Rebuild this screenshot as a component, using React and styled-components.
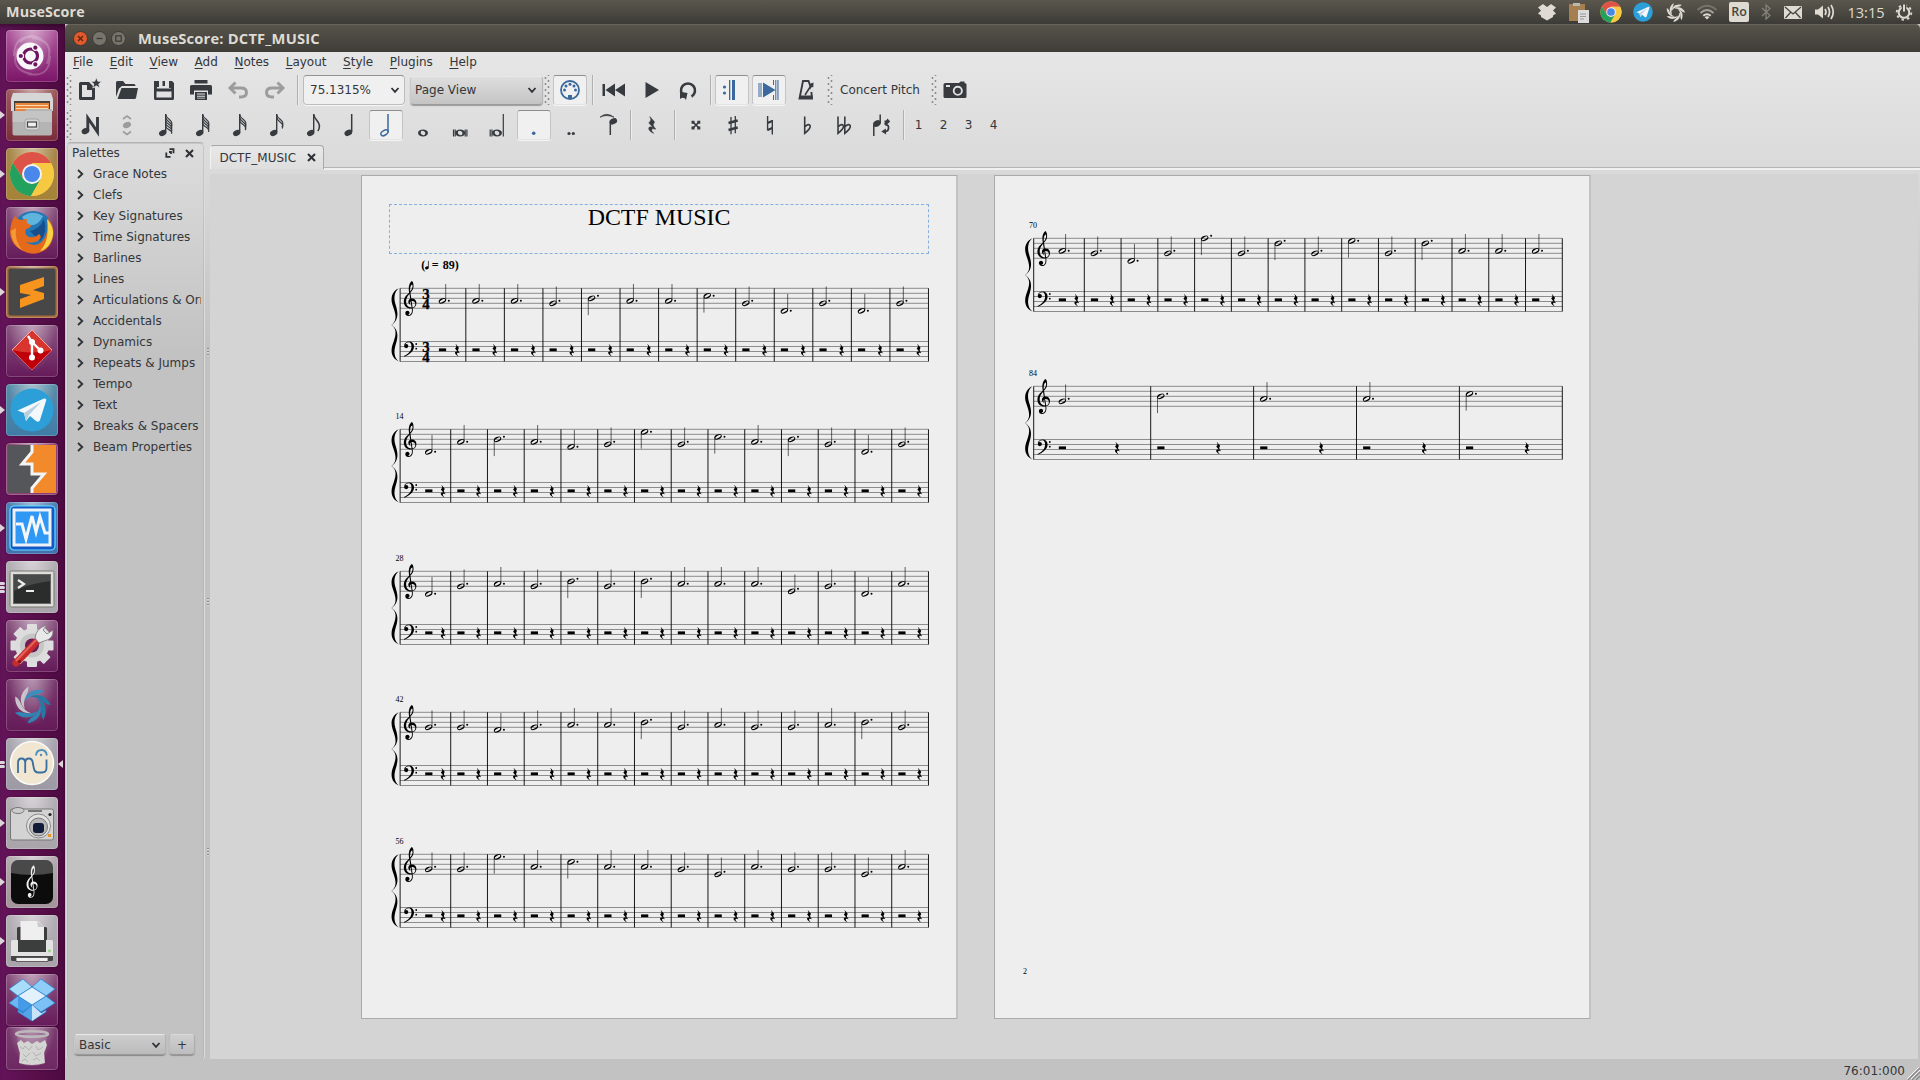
import React from "react";
import styled, { createGlobalStyle, css } from "styled-components";

const Global = createGlobalStyle`
  * { box-sizing: border-box; }
  html, body { margin: 0; padding: 0; overflow: hidden; background: #c2c2c2; }
  body { font-family: "DejaVu Sans", sans-serif; font-size: 12px; color: #33363a; }
  svg { display: block; flex: none; }
`;

const INK = "#373b40";
const BLUE = "#3b699e";

/* ---------- shell ---------- */

const Desktop = styled.div`
  width: 1920px;
  height: 1080px;
  display: flex;
  flex-direction: column;
  overflow: hidden;
`;
const TopBar = styled.header`
  height: 24px;
  flex: none;
  display: flex;
  align-items: center;
  justify-content: space-between;
  padding: 0 3px 0 6px;
  background: linear-gradient(#5b574e, #3c3b37);
  color: #dfdbd2;
  font-family: "Open Sans", "Noto Sans", sans-serif;
`;
const AppName = styled.span`
  font-size: 14.3px;
  font-weight: 700;
  line-height: 24px;
  letter-spacing: 0.15px;
`;
const Tray = styled.div`
  display: flex;
  align-items: center;
  height: 24px;
`;
const TrayItem = styled.span`
  width: ${(p) => p.$w || 32}px;
  display: flex;
  justify-content: center;
  align-items: center;
`;
const Clock = styled.span`
  width: 50px;
  text-align: center;
  font-size: 14.6px;
  line-height: 24px;
`;
const Keyboard = styled.span`
  width: 20px;
  height: 20px;
  border-radius: 2px;
  background: #dfdbd2;
  color: #45443f;
  font-size: 12.5px;
  font-weight: 600;
  line-height: 20px;
  text-align: center;
`;
const Columns = styled.div`
  flex: 1;
  display: flex;
  min-height: 0;
`;

/* ---------- launcher ---------- */

const Launcher = styled.nav`
  width: 65px;
  flex: none;
  padding-top: 6px;
  display: flex;
  flex-direction: column;
  background: linear-gradient(90deg, #64145a 0, #5a0f4c 50%, #4d0a41 64px, #3e0835 65px);
  box-shadow: inset 0 5px 4px -2px rgba(0, 0, 0, 0.35);
`;
const Slot = styled.div`
  height: 52px;
  margin-bottom: ${(p) => p.$gap ?? 7}px;
  display: grid;
  grid-template-columns: 6px 52px 7px;
  align-items: center;
`;
const Tile = styled.div`
  width: 52px;
  height: ${(p) => p.$h || 52}px;
  border-radius: 4px;
  overflow: hidden;
  background: radial-gradient(ellipse at 50% -10%, rgba(255, 255, 255, 0.5), rgba(255, 255, 255, 0) 65%), ${(p) => p.$bg};
  box-shadow: inset 0 0 0 1px rgba(255, 255, 255, 0.2), 0 0 2px rgba(0, 0, 0, 0.35);
`;
const Pips = styled.div`
  display: flex;
  flex-direction: column;
  gap: 1px;
`;
const Pip = styled.i`
  width: 5px;
  height: 3px;
  border-radius: 0 2px 2px 0;
  background: #dcd5da;
`;

/* ---------- window ---------- */

const Window = styled.main`
  flex: 1;
  min-width: 0;
  display: flex;
  flex-direction: column;
`;
const TitleBar = styled.div`
  height: 28px;
  flex: none;
  display: flex;
  align-items: center;
  gap: 4px;
  padding: 1px 0 0 8px;
  border-radius: 5px 5px 0 0;
  background: linear-gradient(#58544b, #3e3d38);
  box-shadow: inset 0 1px 0 #68645a;
`;
const WindowTitle = styled.span`
  margin-left: 8px;
  font-family: "Open Sans", "Noto Sans", sans-serif;
  font-size: 14.7px;
  font-weight: 700;
  letter-spacing: 0.2px;
  color: #dfdbd2;
  line-height: 27px;
`;
const Chrome = styled.div`
  flex: 1;
  min-height: 0;
  display: flex;
  flex-direction: column;
  background: linear-gradient(#e6e6e6 0, #dadada 115px, #c2c2c2 300px);
`;
const MenuBar = styled.div`
  height: 20px;
  flex: none;
  display: flex;
  gap: 16.6px;
  padding-left: 8px;
  line-height: 20px;
`;
const MenuItem = styled.div`
  &::first-letter {
    text-decoration: underline;
    text-underline-offset: 2px;
  }
`;
const Toolbar = styled.div`
  height: ${(p) => p.$h}px;
  flex: none;
  display: flex;
  align-items: center;
`;
const Grip = styled.i`
  width: ${(p) => p.$w || 8}px;
  height: 30px;
  flex: none;
  margin-right: ${(p) => p.$mr || 0}px;
  background-image: radial-gradient(circle, #8c8c8c 0.9px, transparent 1.2px), radial-gradient(circle, #8c8c8c 0.9px, transparent 1.2px);
  background-size: 7px 6px;
  background-position: -1px 0, 2px 3px;
  background-repeat: repeat-y;
`;
const pressed = css`
  background: #f0f0f0;
  border: 1px solid #c4c4c4;
  border-top: 1.5px solid #8f8f8f;
  border-bottom-color: #e3e3e3;
  box-shadow: 0 1px 0 #f4f4f4;
`;
const ToolButton = styled.span`
  width: 34px;
  height: 30px;
  flex: none;
  margin-right: 3px;
  border-radius: 3px;
  border: 1px solid transparent;
  display: flex;
  align-items: center;
  justify-content: center;
  ${(p) => p.$on && pressed}
`;
const Separator = styled.i`
  width: 5px;
  height: 30px;
  flex: none;
  margin-right: ${(p) => p.$mr || 0}px;
  background: linear-gradient(90deg, transparent 2px, #b0b0b0 2px, #b0b0b0 3px, #ececec 3px, #ececec 4px, transparent 4px);
`;
const ZoomBox = styled.div`
  width: 102px;
  height: 30px;
  margin: 0 5px 0 3px;
  padding: 0 4px 0 6px;
  display: flex;
  align-items: center;
  justify-content: space-between;
  border-radius: 4px;
  border: 1px solid #bdbdbd;
  border-top: 1.5px solid #929292;
  background: #f0f0f0;
  box-shadow: 0 1px 0 #f6f6f6;
`;
const Combo = styled.div`
  width: ${(p) => p.$w}px;
  height: ${(p) => p.$h}px;
  padding: 0 ${(p) => p.$pr || 5}px 0 4px;
  display: flex;
  align-items: center;
  justify-content: space-between;
  border-radius: 4px;
  border: 1px solid #f0f0f0;
  border-color: #e9e9e9 #b4b4b4 #9a9a9a #c8c8c8;
  background: linear-gradient(${(p) => p.$bg || "#dedede, #c4c4c4"});
  box-shadow: 0 1px 1px rgba(0, 0, 0, 0.3);
`;
const ToolLabel = styled.span`
  width: ${(p) => p.$w}px;
  flex: none;
  text-align: ${(p) => p.$align || "left"};
`;
const Workspace = styled.div`
  flex: 1;
  min-height: 0;
  display: flex;
`;

/* ---------- palettes ---------- */

const Dock = styled.aside`
  width: 139px;
  height: 919px;
  flex: none;
  margin-left: 1px;
  display: flex;
  flex-direction: column;
  border: 1px solid #dcdcdc;
  border-top-color: #b2b2b2;
  border-radius: 5px;
  box-shadow: inset 0 0 0 1px rgba(160, 160, 160, 0.35);
  overflow: hidden;
`;
const DockHead = styled.div`
  height: 20px;
  flex: none;
  display: flex;
  align-items: center;
  padding-left: 5px;
`;
const DockTitle = styled.span`
  width: 92.5px;
`;
const FloatSlot = styled.span`
  width: 19px;
`;
const PaletteList = styled.div`
  flex: 1;
  width: 134px;
  overflow: hidden;
`;
const PaletteRow = styled.div`
  height: 21px;
  display: flex;
  align-items: center;
  gap: 9px;
  padding-left: 10px;
  white-space: nowrap;
`;
const DockFoot = styled.div`
  height: 26px;
  flex: none;
  display: flex;
  gap: 3px;
  padding-left: 7px;
`;
const AddButton = styled.span`
  width: 26px;
  height: 21px;
  display: flex;
  align-items: center;
  justify-content: center;
  border: 1px solid;
  border-color: #dadada #adadad #989898 #bcbcbc;
  border-radius: 4px;
  background: linear-gradient(#cfcfcf, #bdbdbd);
  box-shadow: 0 1px 1px rgba(0, 0, 0, 0.25);
`;
const Splitter = styled.div`
  width: 5px;
  height: 919px;
  display: flex;
  flex-direction: column;
  align-items: center;
  padding-top: 206px;
  gap: 242px;
`;
const SplitDots = styled.i`
  width: 2px;
  height: 8px;
  background: repeating-linear-gradient(#8d8d8d 0 1px, #d8d8d8 1px 2px, transparent 2px 3px);
`;

/* ---------- document ---------- */

const DocArea = styled.section`
  flex: 1;
  min-width: 0;
  display: flex;
  flex-direction: column;
`;
const TabStrip = styled.div`
  height: 32px;
  flex: none;
  display: flex;
  align-items: flex-start;
  padding-top: 3px;
`;
const Tab = styled.div`
  width: 114px;
  height: 24px;
  flex: none;
  padding: 0 6px 0 8.5px;
  display: flex;
  align-items: center;
  justify-content: space-between;
  border: 1px solid #f2f2f2;
  border-right-color: #a8a8a8;
  border-top-color: #a8a8a8;
  border-bottom: 0;
  border-radius: 4px 4px 0 0;
  background: linear-gradient(#e8e8e8, #dedede);
`;
const TabRule = styled.i`
  flex: 1;
  height: 23px;
  border-bottom: 1px solid #b4b4b4;
  box-shadow: 0 2px 0 #f0f0f0;
`;
const Canvas = styled.div`
  height: 885px;
  margin-right: 2px;
  padding: 1px 0 0 151px;
  display: flex;
  gap: 37px;
  align-items: flex-start;
  background: #d4d4d4;
`;
const Sheet = styled.article`
  width: 597px;
  height: 844px;
  margin-right: -1px;
  border: 1px solid #ababab;
  border-right: 2px solid #c2c2c2;
  background: #eeeeee;
  padding-top: ${(p) => p.$top}px;
  display: flex;
  flex-direction: column;
`;
const TitleFrame = styled.div`
  width: 540px;
  height: 50px;
  flex: none;
  margin-left: 27px;
  border: 1px dashed #86afdf;
  text-align: center;
  font-family: "Liberation Serif", serif;
  font-size: 23.9px;
  line-height: 25px;
  color: #000;
`;
const SheetNumber = styled.span`
  margin: auto 0 40px 28px;
  font-family: "Liberation Serif", serif;
  font-size: 8px;
  line-height: 12px;
  color: #000;
`;
const StatusBar = styled.footer`
  height: 21px;
  flex: none;
  display: flex;
  justify-content: flex-end;
  align-items: center;
  padding-top: 2px;
  background: #c2c2c2;
  gap: 2px;
`;
const SizeGrip = styled.span`
  align-self: flex-end;
`;

/* ---------- engraving ---------- */

const TREBLE =
  "M5.5 4.6C4.4 .4 4.8 -5 8 -7.3C9.8 -6.2 10.2 -1.8 9.2 .8C7.9 4.2 2.5 7.4 2.3 12.8C2.1 16.8 4.8 19.4 8 19.2C10.6 19 11.8 17 11.4 15.1C11 13.2 9.4 12.5 8 12.7C6 13 5.4 15.2 7 16.9C4 15.8 3.4 11.6 7 10.3C10.6 9.3 12.8 12 12.6 15C12.4 18.4 9.8 20.2 7 20.2C3 20.2 0 17.4 0 13.4C0 8.4 3.8 6.2 6.4 3.2C8.3 1 9.2 -1.8 8.5 -3.9C7 -3.8 5.9 -.8 6.5 3.4L8.9 20.5C9.5 24.8 7.8 27.7 4.8 27.7C2.6 27.7 1.4 26.2 1.5 24.6C1.7 21.8 5.6 21.8 5.7 24.5C5.7 25.8 4.8 26.6 3.9 26.7C6.9 27.4 8.6 24.8 8 20.8Z";

function Bass() {
  return (
    <g>
      <path d="M.4 3.6C.8 1.2 3 0 5.2 0C8.4 0 10.2 2 10.2 5C10.2 9.6 5.6 13.2 .3 15.2L.1 14.6C4.6 12.4 7.7 9.4 7.7 5C7.7 2.6 6.8 .8 4.8 .8C3.3 .8 1.9 1.6 1.5 3Z" />
      <circle cx="2.4" cy="4.6" r="2.1" />
      <circle cx="12.4" cy="2.5" r=".9" />
      <circle cx="12.4" cy="7.2" r=".9" />
    </g>
  );
}

const REST =
  "M1.100 -6.200L4 -2.600C4.300 -2.200 4.200 -1.900 3.900 -1.500C2.900 -.3 3.200 .8 5 2.900L4.700 3.200C3.200 2.400 2.100 2.700 2.300 4C2.400 4.800 3 5.400 3.700 5.900L3.400 6.200C1.500 5.200 -.1 3.400 .3 2.200C.7 1.100 2 1.200 3 1.700L.5 -1.300C.3 -1.600 .4 -1.800 .7 -2.100C1.900 -3.200 2 -4.400 .9 -5.900Z";

const STEP = { F5: 0, E5: 1, D5: 2, C5: 3, B: 4, A: 5, G: 6, F: 7, E: 8, D: 9 };

function HalfNote({ x, step }) {
  const y = step * 2.5;
  const down = step <= 4;
  const dotY = step % 2 === 0 ? y - 2.5 : y;
  return (
    <g>
      <path
        fillRule="evenodd"
        transform={`translate(${x + 3.6} ${y}) rotate(-24)`}
        d="M-3.9 0A3.9 2.4 0 1 0 3.9 0A3.9 2.4 0 1 0 -3.9 0ZM-3.2 .3A3.2 1.15 -6 1 0 3.2 -.3A3.2 1.15 -6 1 0 -3.2 .3Z"
      />
      <path
        stroke="#000"
        strokeWidth=".6"
        d={down ? `M${x + 0.3} ${y + 0.8}V${y + 16.8}` : `M${x + 6.9} ${y - 0.8}V${y - 16.8}`}
      />
      <circle cx={x + 10} cy={dotY} r="1" />
    </g>
  );
}

function Staff({ y, from, to }) {
  return (
    <g stroke="#000" strokeWidth=".42">
      {[0, 1, 2, 3, 4].map((i) => (
        <path key={i} d={`M${from} ${y + i * 5}H${to}`} />
      ))}
    </g>
  );
}

const BRACE =
  "M7.200 0C3 3.600 2 9 3.800 15.500C6.400 23.500 8 31 .3 36.600C8 42.200 6.400 49.700 3.800 57.700C2 64.200 3 69.600 7.200 73.200C.2 70 -1.200 63.200 1 56.500C3.800 48.500 6.600 41.500 0 36.600C6.600 31.700 3.800 24.700 1 16.700C-1.200 10 .2 3.200 7.200 0Z";

const System = ({ number, notes, left = 38.1, span = 528.4, firstBar, firstNote, firstRest, restOffset, height, time, tempo, top = 34.3 }) => {
  const right = left + span;
  const width = (right - left - firstBar) / (notes.length - 1);
  const bars = notes.map((_, i) => left + firstBar + i * width);
  return (
    <svg width="594" height={height} viewBox={`0 ${-top} 594 ${height}`} overflow="visible">
      {number && (
        <text x={left - 4.6} y="-10.8" fontFamily="Liberation Serif, serif" fontSize="8">
          {number}
        </text>
      )}
      {tempo && (
        <g fontFamily="Liberation Serif, serif" fontWeight="700" fontSize="12">
          <text x={left + 21.2} y="-19">(</text>
          <ellipse cx={left + 26.8} cy="-20.4" rx="1.9" ry="1.400" transform={`rotate(-20 ${left + 26.8} -20.4)`} />
          <path d={`M${left + 28.3} -21V-27.4`} stroke="#000" strokeWidth=".7" />
          <text x={left + 31.6} y="-19">=</text>
          <text x={left + 42.6} y="-19">{tempo})</text>
        </g>
      )}
      <path d={BRACE} transform={`translate(${left - 8.6} 0)`} />
      <Staff y={0} from={left} to={right} />
      <Staff y={53.2} from={left} to={right} />
      <path d={`M${left} 0V73.2`} stroke="#000" strokeWidth=".9" />
      <path d={TREBLE} transform={`translate(${left + 3.7} 0)`} />
      <g transform={`translate(${left + 3.7} 53.2)`}>
        <Bass />
      </g>
      {time &&
        [0, 53.2].map((y) => (
          <g key={y} fontFamily="Liberation Serif, serif" fontWeight="700" fontSize="14.800" stroke="#000" strokeWidth=".3">
            <text x={left + 22.2} y={y + 10.4}>{time[0]}</text>
            <text x={left + 22.2} y={y + 20.4}>{time[1]}</text>
          </g>
        ))}
      {notes.map((n, i) => {
        const x = i === 0 ? left + firstNote : bars[i - 1] + 6.5;
        const rx = i === 0 ? left + firstRest : bars[i - 1] + restOffset;
        return (
          <g key={i}>
            <HalfNote x={x} step={STEP[n]} />
            <rect x={x + 0.1} y="60.1" width="7.2" height="2.8" />
            <path d={REST} transform={`translate(${rx} 61.8)`} />
            <path d={`M${bars[i]} 0V73.2`} stroke="#000" strokeWidth=".9" />
          </g>
        );
      })}
    </svg>
  );
};

const full = { firstBar: 50.6, firstNote: 25, firstRest: 40.4, restOffset: 25.3, height: 141.4 };
const PAGE_ONE = [
  { notes: "A A A G B A A C5 G D G D G", firstBar: 65.7, firstNote: 38.7, firstRest: 54.6, restOffset: 26.4, height: 141.4, time: "34", tempo: "89" },
  { ...full, number: "14", notes: "D A B A F G E5 G C5 A B G D G" },
  { ...full, number: "28", notes: "D G A G B G B A A A E G D A" },
  { ...full, number: "42", notes: "G G F G A A B G A G G A B G" },
  { ...full, number: "56", notes: "G G E5 A C5 A A G E A G G E A" },
];
const PAGE_TWO = [
  { ...full, height: 148, number: "70", notes: "A G D G F5 G D5 G E5 G D5 A A A" },
  { number: "84", notes: "G B A A C5", firstBar: 117, firstNote: 25, firstRest: 81, restOffset: 65.2, height: 148 },
];

/* ---------- toolbar drawings ---------- */

const Icon = ({ children, color = INK }) => (
  <svg width="34" height="30" viewBox="0 0 34 30" fill={color} stroke="none">
    {children}
  </svg>
);
const line = (w, color = INK) => ({ fill: "none", stroke: color, strokeWidth: w });

const NewIcon = () => (
  <Icon>
    <path fillRule="evenodd" d="M7.5 7H16L22 13V23.5Q22 25 20.5 25H7.500Q6 25 6 23.500V8.500Q6 7 7.500 7ZM9 10V22H19V15H14V10Z" />
    <path stroke="#e0e0e0" strokeWidth=".8" d="M23.300 2.500L24.800 6.200L28.800 6.400L25.700 9L26.800 13L23.300 10.800L19.800 13L20.900 9L17.800 6.400L21.800 6.200Z" />
  </Icon>
);
const OpenIcon = () => (
  <Icon>
    <path d="M6 22V7.500Q6 6 7.500 6H13L15.500 9H24Q25.500 9 25.500 11H12L9 13.500Z" />
    <path d="M11.500 13H28L26 23Q25.800 24 24.500 24H7.500Z" />
  </Icon>
);
const SaveIcon = () => (
  <Icon>
    <path fillRule="evenodd" d="M7 6H25L27 8V23.500Q27 25 25.500 25H8.500Q7 25 7 23.500ZM10 6V13.500H24V6H18V11H15.500V6ZM9.500 16.500V22.500H24.500V16.500Z" />
    <path d="M10 6H12V12H10ZM22 6H25V13H22Z" />
  </Icon>
);
const PrintIcon = () => (
  <Icon>
    <rect x="10.500" y="5" width="13" height="3.500" />
    <path d="M7.500 10H26.500Q28 10 28 11.500V19.500H24V15.500H10V19.500H6V11.500Q6 10 7.500 10Z" />
    <path fillRule="evenodd" d="M11 17H23V25H11ZM13 18.500V19.500H21V18.500ZM13 20.700V21.700H21V20.700ZM13 22.800V23.600H21V22.800Z" />
  </Icon>
);
const UndoIcon = ({ flip }) => (
  <Icon>
    <g transform={flip ? "translate(34 0) scale(-1 1)" : undefined} {...line(2.900, "#9c9c9c")}>
      <path d="M9.500 13H20Q25.500 13 25.500 17.500Q25.500 22 20 22H18" />
      <path d="M14.500 7.500L9 13L14.500 18.500" />
    </g>
  </Icon>
);
const MidiIcon = () => (
  <Icon color={BLUE}>
    <circle cx="17" cy="15" r="9" {...line(1.800, BLUE)} />
    {[[11.500, 15], [13, 11], [17, 9.300], [21, 11], [22.500, 15]].map(([x, y]) => (
      <circle key={x} cx={x} cy={y} r="1.500" />
    ))}
    <path d="M15 20H19V24H15Z" />
  </Icon>
);
const RewindIcon = () => (
  <Icon>
    <path d="M5.500 9H8V21H5.500ZM18 8.500V21.500L8.500 15ZM28 8.500V21.500L18 15Z" />
  </Icon>
);
const PlayIcon = () => <Icon><path d="M11.500 7L25 15L11.500 23Z" /></Icon>;
const LoopIcon = () => (
  <Icon>
    <path d="M13.500 21.500A7 7 0 1 1 20.500 21.500" {...line(2.600)} />
    <path d="M9 16.800L16.500 18L15 25Q13 21 9 24Z" />
  </Icon>
);
const RepeatIcon = () => (
  <Icon color={BLUE}>
    <circle cx="9.500" cy="12" r="1.600" /><circle cx="9.500" cy="18" r="1.600" />
    <path d="M14 5H15.300V25H14ZM17 5H20V25H17Z" />
  </Icon>
);
const PanIcon = () => (
  <Icon color={BLUE}>
    <path d="M6.500 8H7.500V22H6.500ZM8.500 8H9.500V22H8.500ZM11 7.500L23.500 15L11 22.500ZM21 5H22V10H21ZM23.300 5H24.300V25H23.300ZM25.400 5H26.500V25H25.400ZM21 20H22V25H21Z" />
  </Icon>
);
const MetronomeIcon = () => (
  <Icon>
    <path d="M14 6H19.500L22 13L23 23.500H10.500Z" {...line(1.900)} />
    <path d="M16 20L23 9" {...line(1.600)} />
    <path d="M20.500 9L24.500 7.500L24.300 12L21 13Z" />
    <rect x="10.500" y="20.500" width="13" height="3.500" />
    <path d="M22.500 12L20 17H25.500Z" fill="#dedede" />
  </Icon>
);
const CameraIcon = () => (
  <Icon>
    <path d="M7.500 8H21L22.500 6.500H26.500V8Q28.500 8 28.500 9.500V21.500Q28.500 23 27 23H7Q5.500 23 5.500 21.500V9.500Q5.500 8 7.500 8Z" />
    <rect x="8" y="10" width="4" height="2" fill="#e0e0e0" />
    <circle cx="19.800" cy="15.800" r="4.100" fill="none" stroke="#e0e0e0" strokeWidth="1.900" />
  </Icon>
);
const InputIcon = () => (
  <Icon>
    <path d="M14.800 20V8L24.500 22V7" {...line(2.900)} />
    <ellipse cx="12.500" cy="21" rx="4" ry="3" transform="rotate(-25 12.500 21)" />
  </Icon>
);
const StepIcon = () => (
  <Icon color="#9c9c9c">
    <ellipse cx="17" cy="15" rx="4.200" ry="2.900" transform="rotate(-25 17 15)" />
    <path d="M13 9L17 6L21 9M13 21.500L17 24.500L21 21.500" {...line(1.600, "#9c9c9c")} />
  </Icon>
);
const FlagNote = ({ flags }) => (
  <Icon>
    <ellipse cx="15.700" cy="23" rx="3.900" ry="2.800" transform="rotate(-28 15.700 23)" />
    <path d="M18.700 4V22" {...line(1.400)} />
    {Array.from({ length: flags }, (_, i) => (
      <path
        key={i}
        d={flags === 1 ? "M18.700 4.500C19 9.500 24.800 11 24.400 16.500Q24.300 19.500 22.800 21" : `M18.700 ${4.500 + i * 3}C19 ${8.500 + i * 2.800} 24.800 ${10 + i * 2.400} 24.800 ${13 + i * 2.400}Q24.900 ${15.500 + i * 2} 24 ${17 + i * 1.500}`}
        {...line(flags === 1 ? 1.600 : 1.200)}
      />
    ))}
  </Icon>
);
const QuarterIcon = () => (
  <Icon>
    <ellipse cx="16.300" cy="22.800" rx="4" ry="2.900" transform="rotate(-28 16.300 22.800)" />
    <path d="M19.700 4V22" {...line(1.500)} />
  </Icon>
);
const HalfIcon = () => (
  <Icon>
    <ellipse cx="15.500" cy="22.800" rx="4" ry="2.300" transform="rotate(-32 15.500 22.800)" {...line(1.500, BLUE)} />
    <path d="M19 4V22" {...line(1.500, BLUE)} />
  </Icon>
);
const Hollow = ({ cx }) => (
  <path fillRule="evenodd" d={`M${cx - 5} 23a5 3.400 0 1 0 10 0a5 3.400 0 1 0 -10 0ZM${cx - 2.300} 22.300a2.400 2 30 1 0 4.600 1.400a2.400 2 30 1 0 -4.600 -1.400Z`} />
);
const WholeIcon = () => <Icon><Hollow cx={17} /></Icon>;
const BreveIcon = ({ longa }) => (
  <Icon>
    <Hollow cx={longa ? 17 : 17.200} />
    <path d={longa ? "M10.200 19.500V26.500M12 19.500V26.500M23.300 4V26.500" : "M10.500 19.500V26.500M12.200 19.500V26.500M22.200 19.500V26.500M23.900 19.500V26.500"} {...line(1.200)} />
  </Icon>
);
const DotIcon = () => <Icon color={BLUE}><circle cx="16.700" cy="23.300" r="1.800" /></Icon>;
const DoubleDotIcon = () => <Icon><circle cx="15" cy="23.500" r="1.600" /><circle cx="19.300" cy="23.500" r="1.600" /></Icon>;
const TieIcon = () => (
  <Icon>
    <path d="M9 7.200Q15.500 1.500 23 7.200Q15.500 4 9 7.200Z" stroke={INK} strokeWidth=".7" />
    <ellipse cx="22.300" cy="11.300" rx="4" ry="2.900" transform="rotate(-28 22.300 11.300)" />
    <path d="M19.300 12V25" {...line(1.500)} />
  </Icon>
);
const RestIcon = () => (
  <Icon><path transform="translate(13.300 15) scale(1.500 1.350)" d={REST} stroke={INK} strokeWidth=".3" /></Icon>
);
const DoubleSharpIcon = () => (
  <Icon>
    <path d="M13.500 11.500L20.500 18.500M20.500 11.500L13.500 18.500" {...line(1.700)} />
    <path d="M12.500 10.700h3v3h-3ZM18.300 10.700h3v3h-3ZM12.500 16.500h3v3h-3ZM18.300 16.500h3v3h-3Z" />
  </Icon>
);
const SharpIcon = () => (
  <Icon>
    <path d="M15 7V24.300M19.300 6V23.300" {...line(1.300)} />
    <path d="M12.500 13L21.700 10.500M12.500 20L21.700 17.500" {...line(2.500)} />
  </Icon>
);
const NaturalIcon = () => (
  <Icon>
    <path d="M14.600 6V20.500M19.300 10V24.500" {...line(1.400)} />
    <path d="M14.500 13L19.300 11M14.500 20L19.300 18" {...line(2.300)} />
  </Icon>
);
const FlatShape = ({ x }) => (
  <path d={`M${x} 6.500V23.300Q${x + 6} 18.500 ${x + 5.500} 15.800Q${x + 4.300} 13 ${x} 16.800`} {...line(1.600)} />
);
const FlatIcon = () => <Icon><FlatShape x={14.700} /></Icon>;
const DoubleFlatIcon = () => <Icon><FlatShape x={11} /><FlatShape x={17.800} /></Icon>;
const FlipIcon = () => (
  <Icon>
    <ellipse cx="13" cy="13.500" rx="4" ry="3" transform="rotate(-28 13 13.500)" />
    <path d="M9.800 14.500V26M16.200 13V4.500" {...line(1.500)} />
    <path d="M20.500 11.500H25.300M21.500 15Q25 14.500 24.500 18.500Q24 22 20 21.500" {...line(1.800)} />
    <path d="M23.500 8.500L26 11.500L22 15.500L20 14Z" />
    <path d="M21.800 18.500L22.200 24.500L17.300 21.500Z" />
  </Icon>
);
const Chevron = () => (
  <svg width="10" height="8" viewBox="0 0 10 8"><path d="M1.500 2L5 5.800L8.500 2" {...line(1.800, "#2e3236")} /></svg>
);
const CloseIcon = () => (
  <svg width="11" height="11" viewBox="0 0 11 11"><path d="M2 2L9 9M9 2L2 9" {...line(2.100, "#2e3236")} /></svg>
);
const FloatIcon = () => (
  <svg width="10" height="10" viewBox="0 0 10 10"><path d="M4.500 1.200H8.500V5.200M5.500 8.800H1.300V4.600M4 4H6V6" {...line(1.800, "#2e3236")} /></svg>
);

/* ---------- launcher drawings ---------- */

const Art = ({ children }) => <svg width="52" height="52" viewBox="0 0 52 52">{children}</svg>;

const ChromeLogo = ({ size = 52, r = 22 }) => (
  <svg width={size} height={size} viewBox="-26 -26 52 52">
    <g transform={`scale(${r / 22})`}>
      <circle r="22" fill="#f6c844" />
      <path d="M-19.050 -11A22 22 0 0 1 19.050 -11H0L-8.700 5Z" fill="#dd5347" />
      <path d="M-19.050 -11A22 22 0 0 0 -1 22L8.700 5L0 10L-8.700 5Z" fill="#22a15f" />
      <path d="M19.050 -11A22 22 0 0 1 -1 22L8.700 5L0 -11Z" fill="#f7c942" />
      <circle r="10" fill="#f2f2f2" />
      <circle r="8" fill="#4a87ea" />
    </g>
  </svg>
);
const UbuntuArt = () => (
  <Art>
    <g {...line(2, "rgba(255,255,255,.22)")}>
      <path d="M8 26Q8 4 30 7M26 44Q2 40 12 18M44 26Q44 48 22 44M26 8Q50 10 41 34M14 12Q26 0 38 12" />
    </g>
    <circle cx="24" cy="26" r="13.500" fill="#f8f6f8" />
    <circle cx="24.500" cy="26" r="7" {...line(3.200, "#6d1460")} />
    {[0, 120, 240].map((a) => (
      <g key={a} transform={`rotate(${a} 24.500 26)`}>
        <circle cx="14.800" cy="26" r="3.300" fill="#f8f6f8" /><circle cx="14.800" cy="26" r="2.100" fill="#6d1460" />
      </g>
    ))}
  </Art>
);
const FilesArt = () => (
  <Art>
    <path d="M7 4H45L47 10V22H5V10Z" fill="#d6d6d6" /><rect x="8" y="12" width="36" height="12" fill="#45403c" />
    <rect x="9" y="14" width="34" height="8" fill="#e8843a" /><path d="M10 16.500H42M10 19.500H42" stroke="#f9d9b0" strokeWidth="1.200" />
    <path d="M6.500 22H19L20.500 20H46V44.500Q46 46.500 44 46.500H8.500Q6.500 46.500 6.500 44.500Z" fill="#b4b4b4" /><path d="M6.500 22H46V33H6.500Z" fill="#cfcfcf" opacity=".6" />
    <rect x="19" y="30" width="14" height="11" rx="2.500" fill="#d6d6d6" stroke="#a2a2a2" /><rect x="21.500" y="33" width="9" height="5" fill="#efefef" stroke="#444" strokeWidth="1.200" />
  </Art>
);
const FirefoxArt = () => (
  <Art>
    <circle cx="27" cy="24" r="20" fill="#2476b4" /><path d="M16 10Q26 2 37 9Q32 20 22 18Z" fill="#5fb4dd" />
    <path d="M24 24Q34 22 38 12Q42 26 34 34Z" fill="#174f8c" />
    <path d="M42 11Q52 24 44 38Q36 49 22 46Q4 40 4 24Q5 14 9 9Q11 12 15 13Q19 12 21 12Q19 16 25 18Q25 21 20 22Q18 28 23 30Q29 31 33 27Q37 30 32 34Q25 37 19 35Q31 42 38 32Q43 24 42 11Z" fill="#e66a1c" />
    <path d="M41 12Q52 24 43 38Q39 43 34 44Q44 34 41 12Z" fill="#f7d246" />
    <path d="M5 24Q5 37 17 44Q8 34 10 21Z" fill="#f39a35" />
  </Art>
);
const SublimeArt = () => (
  <Art><rect x="2.500" y="2.500" width="47" height="47" rx="2" fill="#474747" /><path d="M14 19L38 11V20L27 24L38 27V33L14 42V33L25 29L14 27Z" fill="#f7941e" /></Art>
);
const GitArt = () => (
  <Art>
    <path d="M26 5L46 25L26 45L6 25Z" fill="#d8352f" stroke="#efb0ac" strokeWidth="1" /><path d="M6 25L26 45L46 25Q26 30 6 25Z" fill="#c00008" />
    <path d="M22 11L26 17V33M26 17L34 25" {...line(2.400, "#fff")} /><circle cx="26" cy="17" r="3" fill="#fff" /><circle cx="34.500" cy="25.500" r="3" fill="#fff" /><circle cx="26" cy="32.500" r="3" fill="#fff" />
  </Art>
);
const TelegramLogo = ({ size = 52 }) => (
  <svg width={size} height={size} viewBox={size === 52 ? "0 0 52 52" : "4 4 44 44"}>
    <circle cx="26" cy="26" r="21.500" fill="#2c9fd9" />
    <path d="M11.500 26.500L38 14.500Q41 14 40 17L34 36Q33 39 30 37L24 32L20 37L18 29Z" fill="#f4f8fb" /><path d="M18 29L35 18L23 31L20 37Z" fill="#b9cfdf" />
  </svg>
);
const BurpArt = () => (
  <Art>
    <rect x="2" y="2" width="48" height="48" fill="#55565a" /><path d="M26 2H50V50H26V45L38 31H26V21H16L26 9Z" fill="#f28a2c" />
    <path d="M26 2V9L16 21H26V31H38L26 45V50" {...line(3, "#f4f4f4")} />
  </Art>
);
const VBoxArt = () => (
  <Art>
    <rect x="4" y="4" width="45" height="44" rx="4" fill="#1458c8" stroke="#5fe0ff" strokeWidth="1.200" /><rect x="8" y="8" width="36" height="35" fill="#2f97f4" stroke="#eef2f6" strokeWidth="3" />
    <path d="M10 22H16L20 37L26 14L30 30L34 15L39 31H43" {...line(3, "#f4f6f8")} />
  </Art>
);
const TerminalArt = () => (
  <Art>
    <rect x="4" y="10" width="44" height="36" rx="1.500" fill="#dcdcd8" stroke="#77776f" /><rect x="7.500" y="13.500" width="37" height="29" fill="#2b2d2c" stroke="#666" />
    <path d="M7.500 14H44.500V20Q26 22 7.500 30Z" fill="#666" opacity=".5" /><path d="M12 19L18 23L12 27" {...line(2.200, "#eee")} /><path d="M20 30H28" {...line(2, "#eee")} />
  </Art>
);
const SettingsArt = () => (
  <Art>
    {[0, 45, 90, 135].map((a) => <rect key={a} x="21" y="4" width="10" height="43" rx="1" fill="#dedede" transform={`rotate(${a} 26 25.500)`} />)}
    <circle cx="26" cy="25.500" r="17" fill="#dcdcdc" /><circle cx="26" cy="25.500" r="12" fill="#c6c6c6" /><circle cx="26" cy="25.500" r="7" fill="#6b1f55" />
    <path d="M10 43L34 18" stroke="#c72c2c" strokeWidth="7" strokeLinecap="round" /><path d="M10 41L32 18" stroke="#e8625c" strokeWidth="2" />
    <path d="M33 23L29 18Q30 8 41 5L37 10L41 14L47 10Q48 19 38 21Z" fill="#e9e9e9" stroke="#777" strokeWidth=".8" /><circle cx="13.500" cy="41.500" r="1.600" fill="#7e1210" />
  </Art>
);
const Swirl = ({ size, colors }) => (
  <svg width={size} height={size} viewBox="-26 -26 52 52">
    {[0, 51, 103, 154, 206, 257, 309].map((a, i) => (
      <path key={a} transform={`rotate(${a})`} d="M-7.500 -3C-7 -11 1 -17.500 12 -14.500Q9.500 -11.500 4 -10.500Q-4 -9 -7.500 -3Z" fill={colors[i]} />
    ))}
  </svg>
);
const MuseArt = () => (
  <Art>
    <circle cx="26" cy="25" r="21.500" fill="#f0e6d2" stroke="#fbfbf8" strokeWidth="1.500" />
    <path d="M12 35V25Q12 20.500 15.600 20.500Q19.200 20.500 19.200 25V35M19.200 25Q19.200 20.500 22.800 20.500Q26.400 20.500 26.800 25L27.800 30Q28.600 34.500 32.500 34.500H36Q40.500 34.500 40.500 30V21.500" {...line(1.800, "#386f9f")} />
    <path d="M30 17.500Q30.500 12 35.500 12Q40.300 12 40.800 17.500" {...line(1.900, "#4e90bd")} /><circle cx="35" cy="17" r="1.200" fill="#4e90bd" />
  </Art>
);
const CameraArt = () => (
  <Art>
    <rect x="4.500" y="12" width="43" height="31" rx="2" fill="#d3d3d3" stroke="#777" /><ellipse cx="12" cy="13.500" rx="6" ry="3" fill="#ccc" stroke="#777" /><rect x="22" y="13" width="14" height="2" fill="#777" />
    <circle cx="32.500" cy="29" r="12" fill="#e2e2e2" stroke="#888" /><circle cx="32.500" cy="30" r="9" fill="#b8b8b8" stroke="#777" /><rect x="27" y="26" width="11" height="10" rx="3" fill="#101c38" />
    <circle cx="44" cy="17.500" r="1.600" fill="#222" /><rect x="42" y="37" width="3" height="3" fill="#e8942a" />
  </Art>
);
const ClefArt = () => (
  <Art>
    <rect x="5" y="4" width="42" height="44" rx="7" fill="#0c0c0c" /><path d="M5 11Q5 4 12 4H40Q47 4 47 11V17Q26 21 5 17Z" fill="#fff" opacity=".25" />
    <path d={TREBLE} transform="translate(20.500 16) scale(.88 .93)" fill="#eee" />
  </Art>
);
const PrinterArt = () => (
  <Art>
    <rect x="11" y="12" width="30" height="14" rx="1.500" fill="#3d3d3d" /><path d="M14.500 6H32L38 12V27H14.500Z" fill="#efefef" /><path d="M31 6L32 12L38 12Z" fill="#c9c9c9" />
    <path d="M6.500 25H45.500Q47 25 47 27V41H5V27Q5 25 6.500 25Z" fill="#e2e2e2" />
    <rect x="12" y="25" width="28" height="12" fill="#3b3e3d" /><path d="M5 41H47V44.500Q47 46 45.500 46H6.500Q5 46 5 44.500Z" fill="#454545" /><path d="M10 42.500H42V46.500H10Z" fill="#efefef" stroke="#454545" strokeWidth=".8" /><circle cx="43.500" cy="36" r="1.400" fill="#8ed67c" />
  </Art>
);
const DropboxArt = () => (
  <Art>
    <g stroke="#1b7fd1" strokeWidth=".7">
      <path d="M17 5L26 13L12 22L3 15Z" fill="#a9dbfb" /><path d="M35 5L26 13L40 22L49 15Z" fill="#8fcdf8" />
      <path d="M12 22L26 31L17 38L3 29Z" fill="#6db6f1" /><path d="M40 22L26 31L35 38L49 29Z" fill="#7cc1f5" />
      <path d="M26 13L40 22L26 31L12 22Z" fill="#e3f1fc" /><path d="M12 36L17 39L26 31L35 39L40 36V38L26 47L12 38Z" fill="#9cd0f8" />
    </g>
    <path d="M12 22L26 31V47L12 38Z" fill="#2f8ee0" opacity=".65" /><path d="M26 31V47L36 40Z" fill="#c8e4fb" />
  </Art>
);
const TrashArt = () => (
  <svg width="52" height="43" viewBox="0 0 52 43">
    <path d="M11 8H41L38 37Q26 41 14 37Z" fill="rgba(220,215,220,.18)" />
    <path d="M11 16L15 13L18 16L22 14L26 17L31 14L34 16L39 13L41 18L38 26L39 36Q26 40 13 36L14 26Z" fill="#d4d4d2" />
    <path d="M14 20l3 2l2 -3l4 4l3 -4M30 19l2 4l5 -3M17 27l3 3l4 -4M27 25l3 4l5 -3M16 34l3 -2l3 3M27 33l4 -2l3 3" {...line(1, "#b2b2b0")} />
    <ellipse cx="26" cy="7" rx="16" ry="2.800" {...line(2.400, "#bdb8bb")} />
  </svg>
);

const purple = "linear-gradient(#8a5580, #661a5a)";
const silver = "linear-gradient(#b3adb4, #a9a4aa)";
const APPS = [
  { art: <UbuntuArt />, bg: "linear-gradient(#b05b9f, #7c1568)" },
  { art: <FilesArt />, bg: "linear-gradient(#9c5a5e, #7c2c3c)", pips: 1 },
  { art: <ChromeLogo />, bg: "linear-gradient(#a8864a, #a68338)", pips: 1 },
  { art: <FirefoxArt />, bg: purple },
  { art: <SublimeArt />, bg: "#a86d3c", pips: 1 },
  { art: <GitArt />, bg: purple },
  { art: <TelegramLogo />, bg: "linear-gradient(#5a8ca8, #3f7ca6)", pips: 1 },
  { art: <BurpArt />, bg: "#8c3f72" },
  { art: <VBoxArt />, bg: "linear-gradient(#4f7fb4, #4470b0)", pips: 1 },
  { art: <TerminalArt />, bg: silver, pips: 3 },
  { art: <SettingsArt />, bg: purple },
  { art: <Swirl size={52} colors={["#3c8fbd", "#2679a5", "#2679a5", "#2f86b4", "#2f86b4", "#c9c4cb", "#c9c4cb"]} />, bg: "linear-gradient(#7a3c6f, #651a58)" },
  { art: <MuseArt />, bg: "linear-gradient(#a9a6b0, #9d9aa6)", pips: 2, active: true },
  { art: <CameraArt />, bg: silver, pips: 1 },
  { art: <ClefArt />, bg: "linear-gradient(#b4aab0, #a2949a)", pips: 1 },
  { art: <PrinterArt />, bg: silver, pips: 1 },
  { art: <DropboxArt />, bg: purple, gap: -2 },
];

const Arrow = ({ left }) => (
  <svg width="5" height="8" viewBox="0 0 5 8"><path d={left ? "M5 0V8L0 4Z" : "M0 0V8L5 4Z"} fill="#dcd5da" /></svg>
);

function Indicator({ count }) {
  if (!count) return <span />;
  if (count === 1) return <Arrow />;
  return <Pips>{Array.from({ length: count }, (_, i) => <Pip key={i} />)}</Pips>;
}

/* ---------- tray drawings ---------- */

const T = "#dfdbd2";
const TrayDropbox = () => (
  <svg width="20" height="18" viewBox="0 0 20 18" fill={T}><path d="M6 1L10 4L14 1L19 4.500L16 7.500L19 10.500L16 12.500V14L10 17.500L4 14V12.500L1 10.500L4 7.500L1 4.500Z" /></svg>
);
const TrayClipboard = () => (
  <svg width="20" height="21" viewBox="0 0 20 21"><rect x="0" y="2" width="16" height="17" fill="#a67f50" /><path d="M4 1H11V4H4Z" fill="#b9b9b0" /><rect x="9" y="8" width="11" height="13" fill="#dcdcdc" /><path d="M11 12H17M11 14.500H17M11 17H15" stroke="#999" /></svg>
);
const TrayWifi = () => (
  <svg width="22" height="18" viewBox="0 0 22 18"><g {...line(1.900, "#77746c")}><path d="M1.500 7Q11 -1.500 20.500 7" /><path d="M4.500 10Q11 4 17.500 10" stroke="#a5a199" /><path d="M7.300 12.800Q11 9.500 14.700 12.800" stroke={T} /></g><path d="M11 16.500L8.500 14Q11 12.500 13.500 14Z" fill={T} /></svg>
);
const TrayBluetooth = () => (
  <svg width="10" height="18" viewBox="0 0 10 18"><path d="M1 5L9 12.500L5 16V2L9 5.500L1 13" {...line(1.300, "#85827a")} /></svg>
);
const TrayMail = () => (
  <svg width="18" height="13" viewBox="0 0 18 13"><rect width="18" height="13" rx="1" fill={T} /><path d="M1 1L9 8L17 1M1.500 12L6.500 6.500M16.500 12L11.500 6.500" {...line(1.300, "#45443f")} /></svg>
);
const TrayVolume = () => (
  <svg width="20" height="16" viewBox="0 0 20 16"><path d="M0 5.500H3L8 1.500V14.500L3 10.500H0Z" fill={T} /><g {...line(1.700, T)}><path d="M10 5Q12 8 10 11" /><path d="M13 3Q16 8 13 13" /><path d="M16 1Q20.500 8 16 15" /></g></svg>
);
const TrayGear = () => (
  <svg width="18" height="18" viewBox="0 0 18 18"><circle cx="9" cy="9.500" r="5.300" {...line(2, T)} /><circle cx="9" cy="9.500" r="7.300" {...line(1.900, T)} strokeDasharray="2.400 3.330" /><path d="M9 1V9" stroke="#4a4842" strokeWidth="4.500" /><path d="M9 1.500V8.500" stroke={T} strokeWidth="2" /></svg>
);

const MENUS = ["File", "Edit", "View", "Add", "Notes", "Layout", "Style", "Plugins", "Help"];
const PALETTES = ["Grace Notes", "Clefs", "Key Signatures", "Time Signatures", "Barlines", "Lines", "Articulations & Ornaments", "Accidentals", "Dynamics", "Repeats & Jumps", "Tempo", "Text", "Breaks & Spacers", "Beam Properties"];

const WindowButton = ({ fill, children }) => (
  <svg width="15" height="15" viewBox="0 0 15 15"><circle cx="7.500" cy="7.500" r="7" fill={fill} stroke="#33322e" strokeWidth=".8" />{children}</svg>
);
const B = ({ on, children }) => <ToolButton $on={on}>{children}</ToolButton>;

export default function App() {
  return (
    <Desktop>
      <Global />
      <TopBar>
        <AppName>MuseScore</AppName>
        <Tray>
          <TrayItem><TrayDropbox /></TrayItem>
          <TrayItem><TrayClipboard /></TrayItem>
          <TrayItem><ChromeLogo size={22} r={25} /></TrayItem>
          <TrayItem><TelegramLogo size={20} /></TrayItem>
          <TrayItem><Swirl size={27} colors={Array(7).fill(T)} /></TrayItem>
          <TrayItem><TrayWifi /></TrayItem>
          <TrayItem><Keyboard>Ro</Keyboard></TrayItem>
          <TrayItem $w={21}><TrayBluetooth /></TrayItem>
          <TrayItem $w={33}><TrayMail /></TrayItem>
          <TrayItem $w={32}><TrayVolume /></TrayItem>
          <Clock>13:15</Clock>
          <TrayItem $w={26}><TrayGear /></TrayItem>
        </Tray>
      </TopBar>
      <Columns>
        <Launcher>
          {APPS.map((a, i) => (
            <Slot key={i} $gap={a.gap}>
              <Indicator count={a.pips} />
              <Tile $bg={a.bg}>{a.art}</Tile>
              {a.active && <Arrow left />}
            </Slot>
          ))}
          <Slot>
            <span />
            <Tile $bg="linear-gradient(#7a3c6f, #6e2862)" $h={43}><TrashArt /></Tile>
          </Slot>
        </Launcher>
        <Window>
          <TitleBar>
            <WindowButton fill="#e2592c"><path d="M5 5L10 10M10 5L5 10" {...line(1.300, "#5a2413")} /></WindowButton>
            <WindowButton fill="#77746b"><path d="M4.500 7.500H10.500" {...line(1.300, "#3a3935")} /></WindowButton>
            <WindowButton fill="#77746b"><rect x="4.800" y="4.800" width="5.400" height="5.400" {...line(1.200, "#3a3935")} /></WindowButton>
            <WindowTitle>MuseScore: DCTF_MUSIC</WindowTitle>
          </TitleBar>
          <Chrome>
            <MenuBar>{MENUS.map((m) => <MenuItem key={m}>{m}</MenuItem>)}</MenuBar>
            <Toolbar $h={36}>
              <Grip />
              <B><NewIcon /></B><B><OpenIcon /></B><B><SaveIcon /></B><B><PrintIcon /></B><B><UndoIcon /></B><B><UndoIcon flip /></B>
              <Separator />
              <ZoomBox>75.1315%<Chevron /></ZoomBox>
              <Combo $w={133} $h={29}>Page View<Chevron /></Combo>
              <Grip $w={10} />
              <B on><MidiIcon /></B>
              <Separator $mr={2} />
              <B><RewindIcon /></B><B><PlayIcon /></B><B><LoopIcon /></B>
              <Separator $mr={2} />
              <B on><RepeatIcon /></B><B on><PanIcon /></B><B><MetronomeIcon /></B>
              <Grip $w={8} $mr={6} />
              <ToolLabel $w={90}>Concert Pitch</ToolLabel>
              <Grip $w={8} />
              <B><CameraIcon /></B>
            </Toolbar>
            <Toolbar $h={34}>
              <Grip />
              <B><InputIcon /></B><B><StepIcon /></B>
              <B><FlagNote flags={5} /></B><B><FlagNote flags={4} /></B><B><FlagNote flags={3} /></B><B><FlagNote flags={2} /></B><B><FlagNote flags={1} /></B>
              <B><QuarterIcon /></B><B on><HalfIcon /></B><B><WholeIcon /></B><B><BreveIcon /></B><B><BreveIcon longa /></B>
              <B on><DotIcon /></B><B><DoubleDotIcon /></B><B><TieIcon /></B>
              <Separator $mr={2} />
              <B><RestIcon /></B>
              <Separator $mr={2} />
              <B><DoubleSharpIcon /></B><B><SharpIcon /></B><B><NaturalIcon /></B><B><FlatIcon /></B><B><DoubleFlatIcon /></B><B><FlipIcon /></B>
              <Separator />
              {[1, 2, 3, 4].map((n) => <ToolLabel key={n} $w={25} $align="center">{n}</ToolLabel>)}
            </Toolbar>
            <Workspace>
              <Dock>
                <DockHead><DockTitle>Palettes</DockTitle><FloatSlot><FloatIcon /></FloatSlot><CloseIcon /></DockHead>
                <PaletteList>
                  {PALETTES.map((p) => (
                    <PaletteRow key={p}>
                      <svg width="7" height="10" viewBox="0 0 7 10"><path d="M1 1L5.300 5L1 9" {...line(1.800, "#2e3236")} /></svg>
                      {p}
                    </PaletteRow>
                  ))}
                </PaletteList>
                <DockFoot>
                  <Combo $w={92} $h={21} $pr={4} $bg="#cdcdcd, #bbbbbb">Basic<Chevron /></Combo>
                  <AddButton>+</AddButton>
                </DockFoot>
              </Dock>
              <Splitter><SplitDots /><SplitDots /><SplitDots /></Splitter>
              <DocArea>
                <TabStrip>
                  <Tab>DCTF_MUSIC<CloseIcon /></Tab>
                  <TabRule />
                </TabStrip>
                <Canvas>
                  <Sheet $top={28}>
                    <TitleFrame>DCTF MUSIC</TitleFrame>
                    {PAGE_ONE.map((s, i) => <System key={i} {...s} notes={s.notes.split(" ")} />)}
                  </Sheet>
                  <Sheet $top={28}>
                    {PAGE_TWO.map((s, i) => <System key={i} {...s} left={38.7} span={528.6} notes={s.notes.split(" ")} />)}
                    <SheetNumber>2</SheetNumber>
                  </Sheet>
                </Canvas>
              </DocArea>
            </Workspace>
            <StatusBar>
              76:01:000
              <SizeGrip>
                <svg width="13" height="13" viewBox="0 0 13 13"><path d="M1 13L13 1M5 13L13 5M9 13L13 9" {...line(1.300, "#888")} /><path d="M0 12L12 0M4 12L13 3" {...line(0.800, "#fff")} /></svg>
              </SizeGrip>
            </StatusBar>
          </Chrome>
        </Window>
      </Columns>
    </Desktop>
  );
}
